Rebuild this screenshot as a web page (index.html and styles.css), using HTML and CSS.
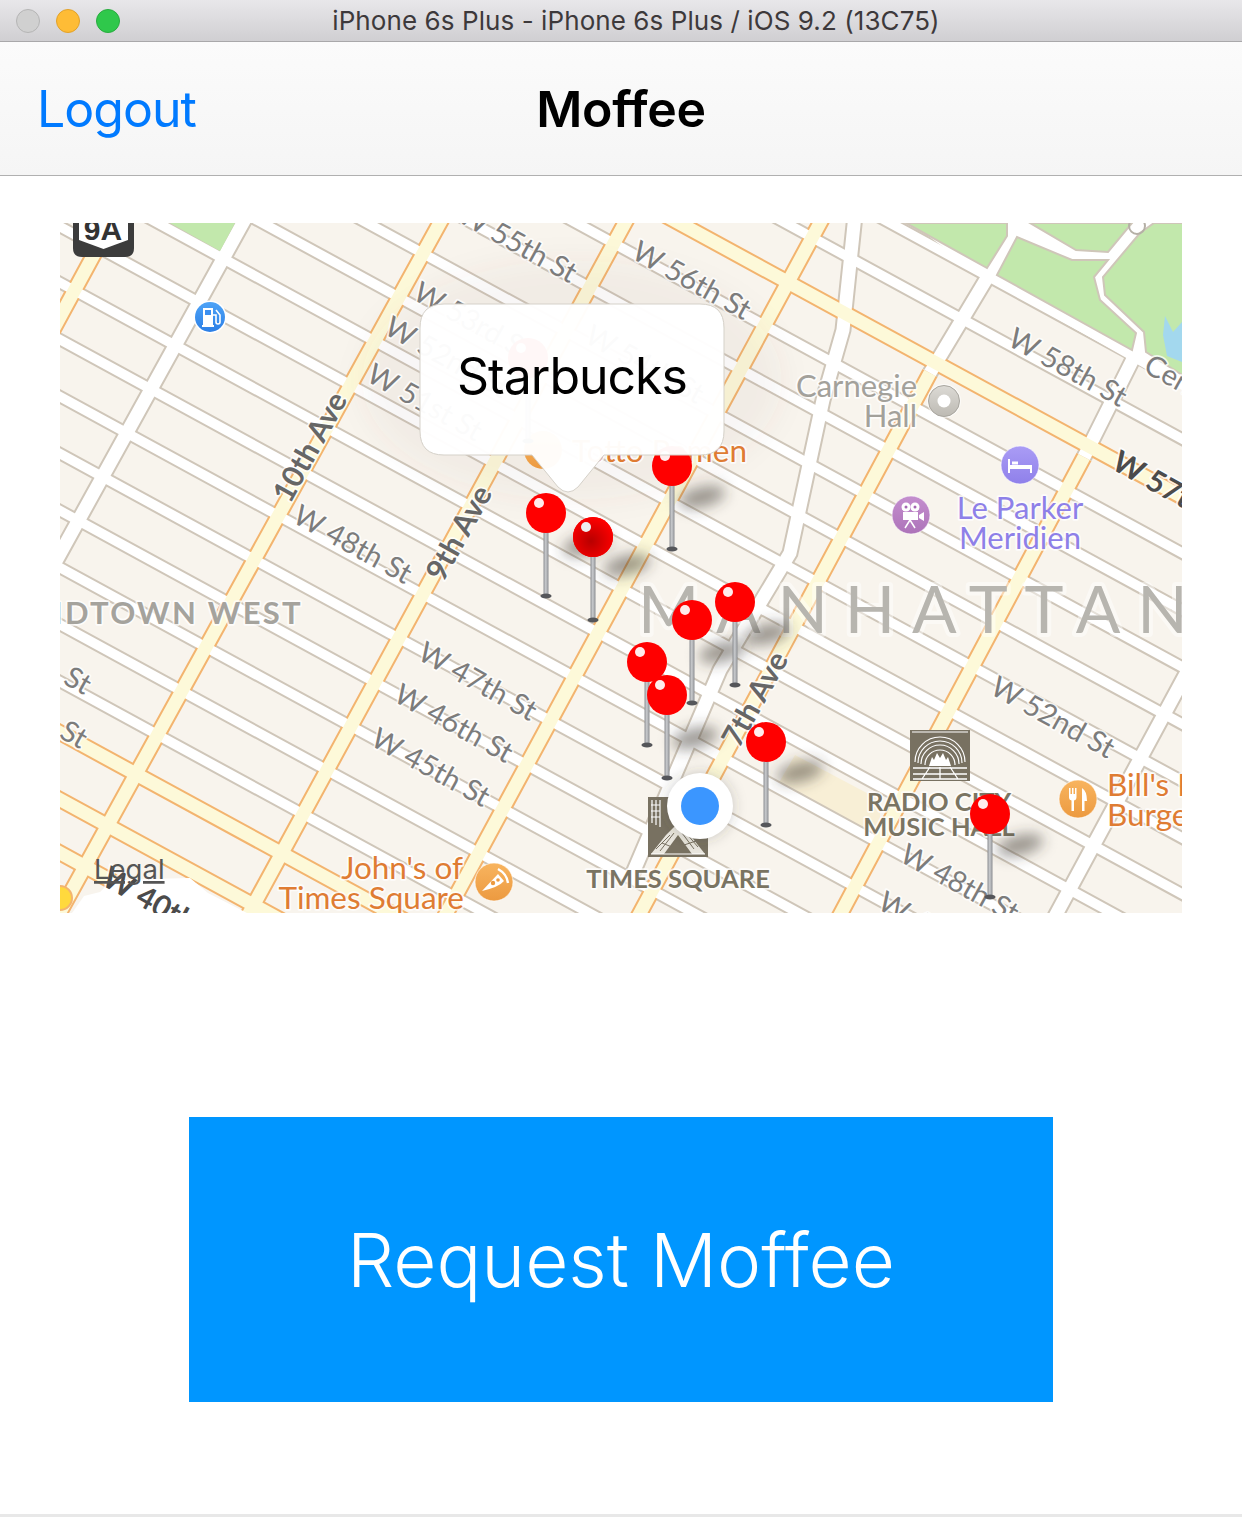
FILE: index.html
```html
<!DOCTYPE html>
<html lang="en">
<head>
<meta charset="utf-8">
<title>Moffee</title>
<link rel="stylesheet" href="styles.css">
</head>
<body>
<header class="titlebar">
  <div class="lights"><span class="light light-close"></span><span class="light light-min"></span><span class="light light-max"></span></div>
  <div class="window-title">iPhone 6s Plus - iPhone 6s Plus / iOS 9.2 (13C75)</div>
</header>
<nav class="navbar">
  <a class="nav-left">Logout</a>
  <div class="nav-title">Moffee</div>
</nav>
<main class="content">
  <div class="map">
    <svg class="map-svg" viewBox="60 223 1122 690" width="1122" height="690" xmlns="http://www.w3.org/2000/svg">
      <defs>
        <path id="streets" d="M0 -262L1250 419M0 -205L1250 476M0 -91L1250 590M0 -34L1250 647M0 23L1250 704M0 80L1250 761M0 137L1250 818M0 194L1250 875M0 250L1250 931M0 307L1250 988M0 364L1250 1045M0 421L1250 1102M0 478L1250 1159M0 535L1250 1216M0 592L1250 1273M0 649L1250 1330"/>
        <path id="white-aves" d="M250 210L40 590M1020 223L930 373M1135 355L1084 457M1215 620L1045 935"/>
        <path id="broadway" d="M855 215L843 330L823 400L790 553L720 670L677 770L630 880"/>
        <path id="yellow-aves" d="M447 210L50 930M632 210L240 930M826 212L440 925M930 373L632 928M1084 457L832 930M111 223L53 330"/>
        <path id="yellow-streets" d="M0 -147L1250 534M0 700L1250 1381M0 767L1250 1448M0 820L170 913"/>
        <linearGradient id="stem" x1="0" x2="1" y1="0" y2="0"><stop offset="0" stop-color="#8d8f93"/><stop offset=".45" stop-color="#c9cbce"/><stop offset="1" stop-color="#8b8d91"/></linearGradient>
        <radialGradient id="shade" cx=".45" cy=".6" r=".6"><stop offset="0" stop-color="#b80000"/><stop offset="1" stop-color="#f00"/></radialGradient>
        <linearGradient id="g-blue" x1="0" x2="0" y1="0" y2="1"><stop offset="0" stop-color="#4da3f7"/><stop offset="1" stop-color="#2c7fe6"/></linearGradient>
        <linearGradient id="g-purple" x1="0" x2="0" y1="0" y2="1"><stop offset="0" stop-color="#aa9cf5"/><stop offset="1" stop-color="#8f80ea"/></linearGradient>
        <linearGradient id="g-plum" x1="0" x2="0" y1="0" y2="1"><stop offset="0" stop-color="#c48ece"/><stop offset="1" stop-color="#ad73b9"/></linearGradient>
        <linearGradient id="g-orange" x1="0" x2="0" y1="0" y2="1"><stop offset="0" stop-color="#f8b45f"/><stop offset="1" stop-color="#ec9a40"/></linearGradient>
        <linearGradient id="g-gray" x1="0" x2="0" y1="0" y2="1"><stop offset="0" stop-color="#dcdad5"/><stop offset="1" stop-color="#bdbab3"/></linearGradient>
        <filter id="blur" x="-80%" y="-160%" width="260%" height="420%"><feGaussianBlur stdDeviation="7"/></filter>
        <filter id="blur-wide" x="-60%" y="-60%" width="220%" height="220%"><feGaussianBlur stdDeviation="14"/></filter>
        <g id="pin">
          <rect x="-2.5" y="18" width="5" height="64" fill="url(#stem)"/>
          <ellipse cx="0" cy="83" rx="5.5" ry="2.6" fill="#55565a"/>
          <circle r="20" fill="#f00"/>
          <circle cx="-7" cy="-10" r="5" fill="#fff" fill-opacity=".92"/>
        </g>
        <ellipse id="pin-shadow" rx="24" ry="10" transform="rotate(-14)" fill="#3d3a34" fill-opacity=".5" filter="url(#blur)"/>
      </defs>

      <rect class="land" x="60" y="223" width="1122" height="690"/>

      <polygon class="beige" points="795,755 880,800 880,850 777,786"/>

      <use href="#streets" class="casing"/>
      <use href="#white-aves" class="casing-ave"/>
      <use href="#broadway" class="casing-ave"/>
      <use href="#yellow-aves" class="orange-casing"/>
      <use href="#yellow-streets" class="orange-casing"/>
      <use href="#streets" class="road"/>
      <use href="#white-aves" class="road-ave"/>
      <use href="#broadway" class="road-ave"/>
      <use href="#yellow-aves" class="yellow"/>
      <use href="#yellow-streets" class="yellow"/>

      <polygon class="park-bed" points="900,215 1190,215 1190,395 1130,360 985,278"/>
      <polygon class="park" points="906,223 1007,223 1007,236 987,268"/>
      <polygon class="park" points="1030,223 1132,223 1108,252 1076,250"/>
      <polygon class="park" points="997,275 1017,237 1072,260 1108,260 1094,277 1100,300 1136,333 1132,350"/>
      <polygon class="park" points="1154,223 1190,223 1190,380 1146,352 1144,332 1105,295 1103,277 1140,233"/>
      <polygon class="water" points="1165,316 1173,332 1182,322 1182,362 1167,356 1163,335"/>
      <circle class="ring" cx="1137" cy="226" r="8"/>
      <polygon class="park-plain" points="170,223 235,223 220,251"/>

      <path class="blob" d="M72 913L84 896L100 892L112 880L190 878L208 893L247 913Z"/>
      <circle class="yellow-dot" cx="60" cy="898" r="12"/>

      <ellipse class="popup-dim" cx="572" cy="380" rx="210" ry="120" filter="url(#blur-wide)"/>

      <text class="label st" transform="translate(513 252) rotate(29)" text-anchor="middle">W 55th St</text>
      <text class="label st" transform="translate(687 289) rotate(29)" text-anchor="middle">W 56th St</text>
      <text class="label st" transform="translate(1063 376) rotate(29)" text-anchor="middle">W 58th St</text>
      <text class="label st" transform="translate(468 330) rotate(29)" text-anchor="middle">W 53rd St</text>
      <text class="label st" transform="translate(442 366) rotate(29)" text-anchor="middle">W 52nd St</text>
      <text class="label st" transform="translate(420 411) rotate(29)" text-anchor="middle">W 51st St</text>
      <text class="label st" transform="translate(640 373) rotate(29)" text-anchor="middle">W 54th St</text>
      <text class="label st" transform="translate(348 553) rotate(29)" text-anchor="middle">W 48th St</text>
      <text class="label st" transform="translate(473 690) rotate(29)" text-anchor="middle">W 47th St</text>
      <text class="label st" transform="translate(449 732) rotate(29)" text-anchor="middle">W 46th St</text>
      <text class="label st" transform="translate(426 776) rotate(29)" text-anchor="middle">W 45th St</text>
      <text class="label st" transform="translate(1048 726) rotate(29)" text-anchor="middle">W 52nd St</text>
      <text class="label st" transform="translate(955 892) rotate(29)" text-anchor="middle">W 48th St</text>
      <text class="label st" transform="translate(876 908) rotate(29)">W 47th St</text>
      <text class="label st" transform="translate(62 683) rotate(29)">St</text>
      <text class="label st" transform="translate(58 737) rotate(29)">St</text>
      <text class="label st" transform="translate(1142 371) rotate(29)">Central</text>
      <text class="label st-dark" transform="translate(1110 468) rotate(29)">W 57th St</text>
      <text class="label st-dark" transform="translate(100 884) rotate(29)">W 40th St</text>
      <text class="label ave" transform="translate(319 452) rotate(-61)" text-anchor="middle">10th Ave</text>
      <text class="label ave" transform="translate(468 538) rotate(-61)" text-anchor="middle">9th Ave</text>
      <text class="label ave" transform="translate(764 704) rotate(-61)" text-anchor="middle">7th Ave</text>

      <text class="label hood" x="303" y="624" text-anchor="end">MIDTOWN WEST</text>
      <text class="label boro" x="638" y="633">MANHATTAN</text>

      <text class="label poi-gray" x="917" y="397" text-anchor="end">Carnegie</text>
      <text class="label poi-gray" x="917" y="427" text-anchor="end">Hall</text>
      <text class="label poi-purple" x="1020" y="519" text-anchor="middle">Le Parker</text>
      <text class="label poi-purple" x="1020" y="549" text-anchor="middle">Meridien</text>
      <text class="label poi-orange" x="572" y="462">Totto Ramen</text>
      <text class="label poi-orange" x="463" y="879" text-anchor="end">John's of</text>
      <text class="label poi-orange" x="464" y="909" text-anchor="end">Times Square</text>
      <text class="label poi-orange" x="1107" y="796">Bill's Bar</text>
      <text class="label poi-orange" x="1107" y="826">Burger</text>
      <text class="label poi-land" x="939" y="811" text-anchor="middle">RADIO CITY</text>
      <text class="label poi-land" x="939" y="836" text-anchor="middle">MUSIC HALL</text>
      <text class="label poi-land" x="678" y="888" text-anchor="middle">TIMES SQUARE</text>

      <!-- route shield -->
      <g>
        <path fill="#3c3c3c" d="M73 215H134V248Q134 257 125 257H82Q73 257 73 248Z"/>
        <path fill="#fff" d="M79 215H128V240L103.500 249L79 240Z"/>
        <text class="shield-text" x="103" y="240" text-anchor="middle">9A</text>
      </g>

      <!-- gas -->
      <g transform="translate(210 317)">
        <circle r="16.500" fill="#fff"/>
        <circle r="15" fill="url(#g-blue)"/>
        <path fill="#fff" d="M-7 -9H3V8H-7ZM-8 8H4V10H-8Z"/>
        <rect x="-5" y="-7" width="6" height="5" fill="#3b8ff0"/>
        <path fill="none" stroke="#fff" stroke-width="1.600" d="M3 -2H6V5Q6 7 8 7T10 5V-2L6 -7"/>
      </g>
      <!-- carnegie -->
      <g transform="translate(944 401)">
        <circle r="17" fill="#fff" fill-opacity=".6"/>
        <circle r="15.500" fill="url(#g-gray)" stroke="#a9a69f"/>
        <circle r="6.500" fill="#fff"/>
      </g>
      <!-- bed -->
      <g transform="translate(1020 465)">
        <circle r="19" fill="url(#g-purple)" stroke="#fff" stroke-opacity=".6"/>
        <path fill="#fff" d="M-12 -6H-10V0H12V8H10V4H-10V8H-12Z"/>
        <rect x="-8" y="-3.500" width="6" height="3" fill="#fff"/>
      </g>
      <!-- cinema -->
      <g transform="translate(911 515)">
        <circle r="19" fill="url(#g-plum)" stroke="#fff" stroke-opacity=".6"/>
        <circle cx="-5" cy="-8" r="4.500" fill="#fff"/><circle cx="4" cy="-8" r="4.500" fill="#fff"/>
        <circle cx="-5" cy="-8" r="1.500" fill="#a566b2"/><circle cx="4" cy="-8" r="1.500" fill="#a566b2"/>
        <path fill="#fff" d="M-8 -3H7V5H-8ZM8 0L13 -3V6L8 3Z"/>
        <path fill="none" stroke="#fff" stroke-width="1.500" d="M-1 5L-6 13M-1 5L4 13"/>
      </g>
      <!-- pizza -->
      <g transform="translate(494 882)">
        <circle r="19" fill="url(#g-orange)" stroke="#fff" stroke-opacity=".6"/>
        <path fill="#fff" d="M-12 9L4 -8L10 -1Q5 5 -12 9Z"/>
        <path fill="none" stroke="#fff" stroke-width="2.400" d="M4 -13Q13 -8 14 1"/>
        <circle cx="-1" cy="1" r="2.200" fill="#ec9a40"/><circle cx="4" cy="-2" r="1.800" fill="#ec9a40"/>
      </g>
      <!-- restaurant -->
      <g transform="translate(1078 799)">
        <circle r="19" fill="url(#g-orange)" stroke="#fff" stroke-opacity=".6"/>
        <path fill="#fff" d="M-9 -11H-7.500V-5H-6V-11H-4.500V-5H-3V-11H-1.500V-2Q-1.500 1 -4 1.500V12H-6.500V1.500Q-9 1 -9 -2Z"/>
        <path fill="#fff" d="M4 12V-11Q9 -8 9 2H6.500V12Z"/>
      </g>
      <!-- totto icon under callout -->
      <circle cx="543" cy="450" r="19" fill="url(#g-orange)"/>

      <!-- radio city -->
      <g transform="translate(910 730)">
        <rect width="60" height="51" fill="#787161"/>
        <path fill="none" stroke="#fff" stroke-width="1.200" d="M2 2H58M5 32A25 25 0 0 1 55 32M8 33A22 22 0 0 1 52 33M11 34A19 19 0 0 1 49 34M15 35A15 15 0 0 1 45 35"/>
        <path fill="#fff" d="M19 36L22 27L24 30L27 23L30 28L33 23L36 30L38 27L41 36Z"/>
        <path fill="none" stroke="#fff" stroke-width="1.300" d="M3 38H57M3 44H57M3 49H57M20 37L12 49M30 37V49M40 37L48 49"/>
      </g>
      <!-- times square -->
      <g transform="translate(648 797)">
        <rect width="60" height="60" fill="#787161"/>
        <path fill="none" stroke="#fff" stroke-width="1.200" d="M4 3V26M8 3V28M12 3V30M3 8H12M3 14H12M3 20H12"/>
        <path fill="#e9e6de" d="M3 57L18 38L30 26L42 38L57 57H44L30 38L16 57Z"/>
        <path fill="none" stroke="#787161" stroke-width="1" d="M8 52L22 38M12 54L26 36M14 46L24 50M38 36L50 50M34 36L46 52M36 48L48 44"/>
        <path fill="none" stroke="#fff" stroke-width="1.200" d="M3 57H57"/>
      </g>

      <!-- pin shadows -->
      <use href="#pin-shadow" transform="translate(702 497)"/>
      <use href="#pin-shadow" transform="translate(586 545)"/>
      <use href="#pin-shadow" transform="translate(627 565)"/>
      <use href="#pin-shadow" transform="translate(722 652)"/>
      <use href="#pin-shadow" transform="translate(767 634)"/>
      <use href="#pin-shadow" transform="translate(695 738)"/>
      <use href="#pin-shadow" transform="translate(800 772)"/>
      <use href="#pin-shadow" transform="translate(1020 845)"/>

      <!-- pins -->
      <use href="#pin" x="528" y="358"/>
      <use href="#pin" x="672" y="466"/>
      <use href="#pin" x="546" y="513"/>
      <use href="#pin" x="593" y="537"/>
      <circle cx="593" cy="537" r="20" fill="url(#shade)"/>
      <circle cx="586" cy="527" r="5" fill="#eee"/>
      <use href="#pin" x="735" y="602"/>
      <use href="#pin" x="692" y="620"/>
      <use href="#pin" x="647" y="662"/>
      <use href="#pin" x="667" y="695"/>
      <use href="#pin" x="766" y="742"/>
      <use href="#pin" x="990" y="814"/>

      <!-- user location -->
      <circle cx="700" cy="806" r="33" fill="#3d3a34" fill-opacity=".25" filter="url(#blur)"/>
      <circle cx="700" cy="806" r="33" fill="#fff"/>
      <circle cx="700" cy="806" r="19" fill="#3b96ff"/>

      <!-- callout -->
      <path class="callout" d="M444 304H700Q724 304 724 328V431Q724 455 700 455H604L578 487Q568 497 558 487L532 455H444Q420 455 420 431V328Q420 304 444 304Z"/>
      <text class="callout-text" x="572" y="394" text-anchor="middle">Starbucks</text>

      <text class="legal" x="94" y="879">Legal</text>
    </svg>
  </div>
  <button class="request">Request Moffee</button>
</main>
<div class="bottom-line"></div>
</body>
</html>
```

FILE: styles.css
```css
* { box-sizing: border-box; }
html, body { margin: 0; padding: 0; background: #fff; }
body { width: 1242px; height: 1518px; overflow: hidden; font-family: Inter, "Liberation Sans", sans-serif; }

.titlebar {
  height: 42px;
  display: flex;
  align-items: center;
  justify-content: center;
  padding-left: 30px;
  position: relative;
  background: linear-gradient(#e8e7ea, #d0cfd2);
  border-bottom: 1px solid #a9a8aa;
}
.lights { position: absolute; left: 16px; top: 9px; display: flex; gap: 16px; }
.light { width: 24px; height: 24px; border-radius: 50%; border: 1px solid; }
.light-close { background: #d0d0d0; border-color: #b5b5b5; }
.light-min { background: #febc36; border-color: #e2a22a; }
.light-max { background: #2fc84b; border-color: #28ac3f; }
.window-title { font-size: 26px; letter-spacing: .08px; color: #3d393b; white-space: nowrap; }

.navbar {
  height: 134px;
  position: relative;
  display: flex;
  align-items: center;
  justify-content: center;
  background: linear-gradient(#fbfbfb, #f5f5f5);
  border-bottom: 1px solid #b0b0b0;
}
.nav-left { position: absolute; left: 37px; top: 37px; font-size: 50px; line-height: 60px; letter-spacing: -1px; color: #007aff; }
.nav-title { font-size: 50px; line-height: 60px; font-weight: 600; letter-spacing: -.3px; color: #000; }

.content { display: flex; flex-direction: column; align-items: center; }
.map { width: 1122px; height: 690px; margin-top: 47px; overflow: hidden; }
.map-svg { display: block; }

.request {
  width: 864px;
  height: 285px;
  margin-top: 204px;
  border: 0;
  background: #0096ff;
  color: #fff;
  font-family: Inter, "Liberation Sans", sans-serif;
  font-size: 74.5px;
  font-weight: 300;
}
.bottom-line { height: 3px; margin-top: 112px; background: #e8e8e8; }

/* map */
.land { fill: #f8f4ed; }
.beige { fill: #f8efd6; }
.casing { fill: none; stroke: #cfc6b9; stroke-width: 13.5; }
.road { fill: none; stroke: #fff; stroke-width: 9.5; }
.casing-ave { fill: none; stroke: #cfc6b9; stroke-width: 17; }
.road-ave { fill: none; stroke: #fff; stroke-width: 13; }
.orange-casing { fill: none; stroke: #f3b46f; stroke-width: 17; }
.yellow { fill: none; stroke: #fdf9d9; stroke-width: 13; }
.park-bed { fill: #fff; }
.park { fill: #c2e8ac; stroke: #cfc6b9; stroke-width: 2; }
.park-plain { fill: #c2e8ac; }
.water { fill: #a3d8ee; }
.ring { fill: none; stroke: #b5b0a6; stroke-width: 2; }
.blob { fill: #fff; }
.yellow-dot { fill: #ffd93d; stroke: #f3b46f; stroke-width: 2; }
.popup-dim { fill: #5a5040; fill-opacity: .05; }

.label {
  font-family: Lato, "Open Sans", sans-serif;
  paint-order: stroke;
  stroke: #fff;
  stroke-opacity: .75;
  stroke-width: 3.5px;
  stroke-linejoin: round;
}
.st { font-size: 29px; fill: #7c7c7c; }
.st-dark { font-size: 30px; font-weight: 700; fill: #4b4b4b; }
.ave { font-size: 30px; font-weight: 700; fill: #666; }
.hood { font-size: 31px; font-weight: 700; letter-spacing: 2.3px; fill: #a5a39d; }
.boro { font-size: 66px; letter-spacing: 16.8px; fill: #b7b5af; stroke-width: 8px; stroke-opacity: .45; }
.poi-gray { font-size: 31px; fill: #a3a19b; }
.poi-purple { font-size: 31px; fill: #8e80e8; }
.poi-orange { font-size: 31.5px; fill: #df7c33; }
.poi-land { font-size: 25.5px; font-weight: 700; fill: #7a7462; }
.shield-text { font-family: "Liberation Sans", sans-serif; font-size: 30px; font-weight: 700; fill: #333; }
.callout { fill: #fff; fill-opacity: .97; stroke: #d5d1c9; stroke-width: 1; }
.callout-text { font-family: Inter, sans-serif; font-size: 50px; letter-spacing: -1px; fill: #000; }
.legal { font-family: Inter, sans-serif; font-size: 27.5px; fill: #555; text-decoration: underline; }
```
